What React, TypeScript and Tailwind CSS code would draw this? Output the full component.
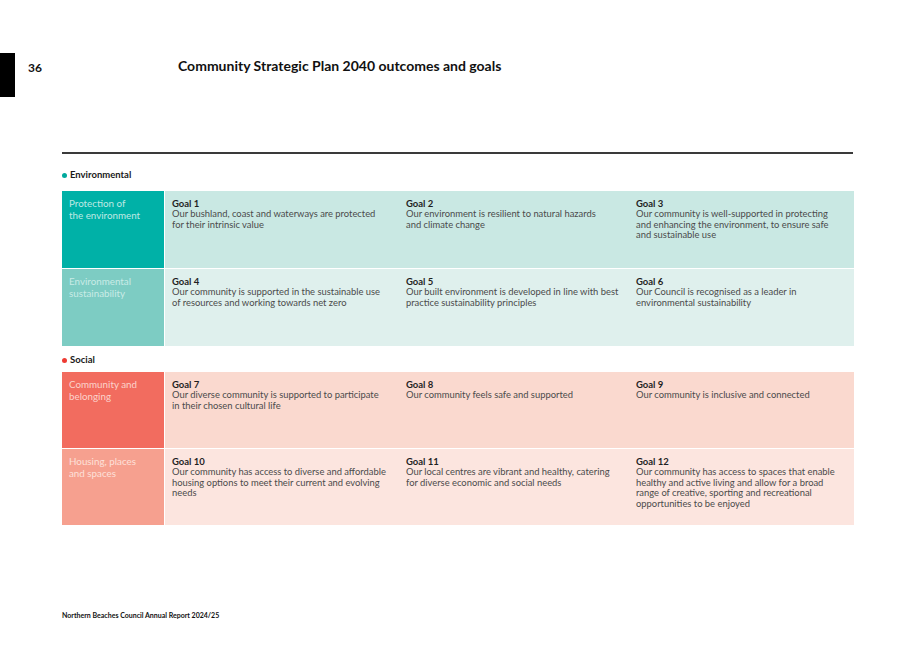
import React from 'react';

type Goal = { title: string; lines: string[] };
type Row = { label: string[]; labelBg: string; labelText: string; bg: string; goals: Goal[] };

const environmental: Row[] = [
  {
    label: ['Protection of', 'the environment'],
    labelBg: 'bg-[#00b1a7]',
    labelText: 'text-[#bfe9e4]',
    bg: 'bg-[#c9e8e3]',
    goals: [
      { title: 'Goal 1', lines: ['Our bushland, coast and waterways are protected', 'for their intrinsic value'] },
      { title: 'Goal 2', lines: ['Our environment is resilient to natural hazards', 'and climate change'] },
      { title: 'Goal 3', lines: ['Our community is well-supported in protecting', 'and enhancing the environment, to ensure safe', 'and sustainable use'] },
    ],
  },
  {
    label: ['Environmental', 'sustainability'],
    labelBg: 'bg-[#7dccc3]',
    labelText: 'text-[#c9ebe6]',
    bg: 'bg-[#dff0ed]',
    goals: [
      { title: 'Goal 4', lines: ['Our community is supported in the sustainable use', 'of resources and working towards net zero'] },
      { title: 'Goal 5', lines: ['Our built environment is developed in line with best', 'practice sustainability principles'] },
      { title: 'Goal 6', lines: ['Our Council is recognised as a leader in', 'environmental sustainability'] },
    ],
  },
];

const social: Row[] = [
  {
    label: ['Community and', 'belonging'],
    labelBg: 'bg-[#f26c5f]',
    labelText: 'text-[#fcd3cc]',
    bg: 'bg-[#fad9cf]',
    goals: [
      { title: 'Goal 7', lines: ['Our diverse community is supported to participate', 'in their chosen cultural life'] },
      { title: 'Goal 8', lines: ['Our community feels safe and supported'] },
      { title: 'Goal 9', lines: ['Our community is inclusive and connected'] },
    ],
  },
  {
    label: ['Housing, places', 'and spaces'],
    labelBg: 'bg-[#f6a08f]',
    labelText: 'text-[#fde0da]',
    bg: 'bg-[#fce5df]',
    goals: [
      { title: 'Goal 10', lines: ['Our community has access to diverse and affordable', 'housing options to meet their current and evolving', 'needs'] },
      { title: 'Goal 11', lines: ['Our local centres are vibrant and healthy, catering', 'for diverse economic and social needs'] },
      { title: 'Goal 12', lines: ['Our community has access to spaces that enable', 'healthy and active living and allow for a broad', 'range of creative, sporting and recreational', 'opportunities to be enjoyed'] },
    ],
  },
];

const colWidths = ['w-[234px]', 'w-[230px]', 'w-[225px]'];

function Section({ name, dot, rows, gap, rowH }: { name: string; dot: string; rows: Row[]; gap: string; rowH: string }) {
  return (
    <div>
      <div className="flex items-center gap-[3px] h-[14px]">
        <span className={`w-[5px] h-[5px] rounded-full ${dot}`} />
        <span className="text-[9.5px] font-bold text-[#1a1a1a]">{name}</span>
      </div>
      <div className={`${gap} flex flex-col gap-px`}>
        {rows.map((row) => (
          <div key={row.label.join(' ')} className={`flex ${rowH} gap-px`}>
            <div className={`w-[102px] shrink-0 ${row.labelBg} px-[7px] pt-[6px]`}>
              {row.label.map((l) => (
                <p key={l} className={`text-[9.8px] leading-[12px] whitespace-nowrap ${row.labelText}`}>{l}</p>
              ))}
            </div>
            <div className={`flex flex-1 ${row.bg}`}>
              {row.goals.map((g, i) => (
                <div key={g.title} className={`${colWidths[i]} pl-[7px] pt-[7px]`}>
                  <p className="text-[9.5px] leading-[11.5px] font-bold text-[#1f1f1f]">{g.title}</p>
                  {g.lines.map((l) => (
                    <p key={l} className="text-[9.4px] leading-[10.5px] text-[#4b4b4b] whitespace-nowrap">{l}</p>
                  ))}
                </div>
              ))}
            </div>
          </div>
        ))}
      </div>
    </div>
  );
}

export default function App() {
  return (
    <div className="w-[914px] h-[647px] bg-white font-['Lato','Noto_Sans',sans-serif] relative overflow-hidden">
      <div className="flex pt-[53px]">
        <div className="w-[15px] h-[44px] bg-black" />
        <div className="w-[163px] pl-[13px] pt-[6px] text-[12px] font-bold text-[#111]">36</div>
        <h1 className="pt-[2px] text-[14px] font-bold text-[#111]">Community Strategic Plan 2040 outcomes and goals</h1>
      </div>

      <div className="mx-[62px] mt-[55px] w-[791px]">
        <div className="h-[1.5px] bg-[#3a3a3a]" />
        <div className="mt-[15px]">
          <Section name="Environmental" dot="bg-[#00a99d]" rows={environmental} gap="mt-[8px]" rowH="h-[77px]" />
        </div>
        <div className="mt-[8px]">
          <Section name="Social" dot="bg-[#ee3b33]" rows={social} gap="mt-[4px]" rowH="h-[76px]" />
        </div>
      </div>

      <div className="absolute left-[62px] top-[610px] text-[7px] font-bold text-[#111]">
        Northern Beaches Council Annual Report 2024/25
      </div>
    </div>
  );
}
